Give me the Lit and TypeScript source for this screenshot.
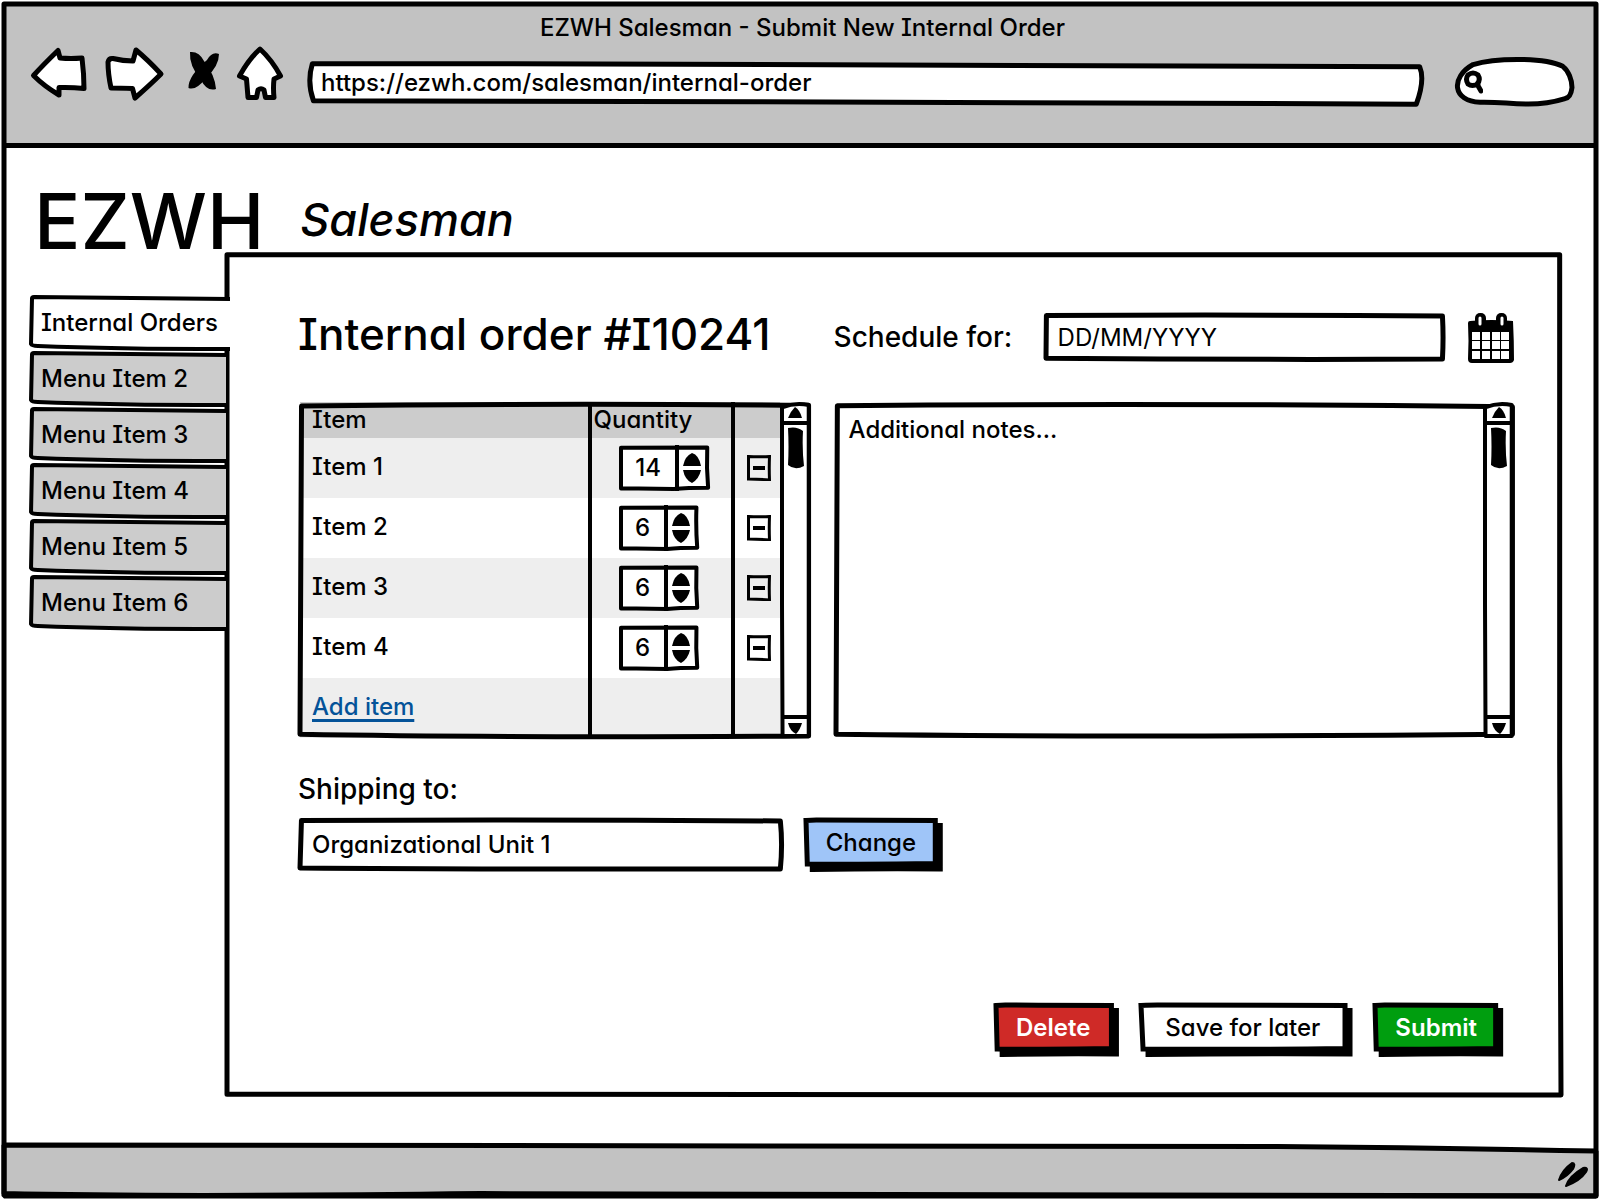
import { LitElement, html, css, svg, nothing } from "lit";
import { customElement, property, state } from "lit/decorators.js";

/** Stretches an outline drawn on a 100 x 100 grid over the nearest positioned box. */
const outline = (d: string, kind = "") => html`
  <svg class="outline ${kind}" viewBox="0 0 100 100" preserveAspectRatio="none" aria-hidden="true">
    <path d=${d}></path>
  </svg>
`;

const outlineStyles = css`
  .outline {
    position: absolute;
    inset: 2px;
    width: calc(100% - 4px);
    height: calc(100% - 4px);
    overflow: visible;
    pointer-events: none;
    z-index: -1;
  }
  .outline path {
    fill: #fff;
    stroke: #000;
    stroke-width: 5px;
    stroke-linejoin: round;
    stroke-linecap: round;
    vector-effect: non-scaling-stroke;
  }
  .outline.over {
    z-index: 2;
  }
  .outline.over path {
    fill: none;
  }
  .outline.medium path {
    stroke-width: 4px;
  }
`;

const baseStyles = css`
  * {
    box-sizing: border-box;
  }
  button,
  input,
  textarea {
    margin: 0;
    padding: 0;
    border: 0;
    background: none;
    color: inherit;
    font: inherit;
    font-feature-settings: inherit;
    outline-offset: 2px;
  }
  button {
    cursor: pointer;
  }
  svg {
    display: block;
  }
`;

@customElement("sketch-scrollbar")
export class SketchScrollbar extends LitElement {
  static styles = [
    baseStyles,
    outlineStyles,
    css`
      :host {
        display: flex;
        flex-direction: column;
        flex: none;
        position: relative;
        isolation: isolate;
        width: 31px;
      }
      .end {
        height: 19px;
        flex: none;
        display: grid;
        place-items: end center;
      }
      .end.down {
        place-items: start center;
        padding-top: 4px;
      }
      .track {
        flex: 1;
        border-top: 4px solid #000;
        border-bottom: 4px solid #000;
        margin: 0 3px;
        padding: 2px 5px;
      }
    `,
  ];

  render() {
    return html`
      ${outline("M0,1 Q50,-0.6 99,0.3 Q101,50 99,100 L2,100 L0,60 Z", "medium")}
      <button class="end" aria-label="Scroll up">
        <svg width="14" height="14" viewBox="0 0 14 14"><path d="M0,11 Q2,5 7,0 Q12,3 14,11 Z" /></svg>
      </button>
      <div class="track">
        <svg width="16" height="42" viewBox="0 0 16 42"><path d="M0,1 Q9,-1 15,4 Q14,22 16,39 Q7,44 0,38 Q1,20 0,1 Z" /></svg>
      </div>
      <button class="end down" aria-label="Scroll down">
        <svg width="14" height="11" viewBox="0 0 14 11"><path d="M0,0 L14,0 Q12,7 8,11 Q2,8 0,0 Z" /></svg>
      </button>
    `;
  }
}

@customElement("quantity-stepper")
export class QuantityStepper extends LitElement {
  @property({ type: Number }) value = 0;
  @property() label = "";

  static styles = [
    baseStyles,
    outlineStyles,
    css`
      :host {
        display: inline-flex;
        position: relative;
        isolation: isolate;
        height: 46px;
      }
      .value {
        width: 45px;
        padding-left: 3px;
        text-align: center;
      }
      .value.wide {
        width: 56px;
      }
      .steps {
        width: 36px;
        padding-right: 5px;
        border-left: 4px solid #000;
        display: flex;
        flex-direction: column;
        align-items: center;
        justify-content: center;
        gap: 4px;
      }
    `,
  ];

  private step(by: number) {
    this.value = Math.max(0, this.value + by);
  }

  render() {
    return html`
      ${outline("M0,2 L98,1 Q97,50 99,97 Q75,97 60,100 Q30,98 0,99 Z", "medium")}
      <input
        class="value ${this.value > 9 ? "wide" : ""}"
        aria-label=${this.label}
        inputmode="numeric"
        .value=${String(this.value)}
      />
      <div class="steps">
        <button aria-label="Increase" @click=${() => this.step(1)}>
          <svg width="18" height="13" viewBox="0 0 18 13"><path d="M0,13 Q2,3 9,0 Q16,2 18,13 Z" /></svg>
        </button>
        <button aria-label="Decrease" @click=${() => this.step(-1)}>
          <svg width="18" height="13" viewBox="0 0 18 13"><path d="M0,0 L18,0 Q16,9 9,13 Q2,10 0,0 Z" /></svg>
        </button>
      </div>
    `;
  }
}

const backIcon = svg`<path class="shape" d="M2.5,29.5 Q13,18 27,4.5 L29,12 Q40,13 51,12 Q53,28 53,42.5 Q40,41 28,41.5 L28,49 Q13,40 2.5,29.5 Z" />`;
const forwardIcon = svg`<path class="shape" d="M3,16 Q4,12 8,12.5 Q18,15 28,15 L31,4 Q43,14 56,28 Q46,38 30,52 L27.5,42.5 Q15,42 6,42 Q3,28 3,16 Z" />`;
const stopIcon = svg`
  <path d="M9,6 Q18,5 23,15 Q34,29 35,43 Q26,46 20,34 Q8,20 9,6 Z" />
  <path d="M38,8 Q31,5 26,14 Q7,30 7.5,42 Q15,45 25,32 Q38,20 38,8 Z" />
`;
const homeIcon = svg`<path class="shape" d="M23,3 Q35,14 43.5,30 L37,33 Q36,42 37,51.5 L28.5,51.5 L27,44 Q24,41.5 21,44 L19.5,51.5 L11,51.5 L9.5,33 L2.5,30 Q12,13 23,3 Z" />`;

const navIcons = [
  { label: "Back", width: 56, shape: backIcon },
  { label: "Forward", width: 58, shape: forwardIcon },
  { label: "Stop", width: 38, shape: stopIcon },
  { label: "Home", width: 46, shape: homeIcon },
];

const menu = ["Internal Orders", "Menu Item 2", "Menu Item 3", "Menu Item 4", "Menu Item 5", "Menu Item 6"];

@customElement("app-root")
export class AppRoot extends LitElement {
  @state() private active = 0;
  @state() private items = [
    { name: "Item 1", quantity: 14 },
    { name: "Item 2", quantity: 6 },
    { name: "Item 3", quantity: 6 },
    { name: "Item 4", quantity: 6 },
  ];

  static styles = [
    baseStyles,
    outlineStyles,
    css`
      :host {
        display: block;
        color: #000;
        font: 500 24px/32px Inter, "Open Sans", sans-serif;
        font-feature-settings: "cv11", "cv08";
      }
      .window {
        position: relative;
        isolation: isolate;
        min-height: 100vh;
        padding: 4px;
        background: #fff;
        display: flex;
        flex-direction: column;
      }
      .window > .outline {
        inset: 4px;
        width: calc(100% - 8px);
        height: calc(100% - 8px);
      }

      .toolbar {
        background: #c2c2c2;
        border-bottom: 5px solid #000;
        padding: 8px 22px 36px 27px;
      }
      .window-title {
        margin: 0;
        font-size: 24px;
        font-weight: 500;
        text-align: center;
        line-height: 32px;
      }
      .nav {
        display: flex;
        align-items: flex-end;
        margin-top: 2px;
      }
      .nav-icons {
        display: flex;
        gap: 18px;
        margin: 0 24px 5px 0;
      }
      .nav-icons svg {
        overflow: visible;
      }
      .shape {
        fill: #fff;
        stroke: #000;
        stroke-width: 5px;
        stroke-linejoin: round;
      }
      .field {
        position: relative;
        isolation: isolate;
        display: flex;
        flex: 1;
        min-width: 0;
      }
      .field input {
        width: 100%;
        min-width: 0;
        height: 100%;
        padding: 0 14px;
      }
      .address {
        height: 46px;
        margin-right: 30px;
      }
      .address input {
        padding-bottom: 4px;
      }
      .search {
        position: relative;
        isolation: isolate;
        flex: none;
        width: 119px;
        height: 50px;
        display: flex;
        align-items: center;
        padding: 0 14px 0 8px;
      }
      .search input {
        width: 100%;
        min-width: 0;
      }
      .search .glass {
        flex: none;
        fill: none;
        stroke: #000;
        stroke-width: 5px;
        stroke-linecap: round;
        stroke-linejoin: round;
      }

      .page {
        flex: 1;
        display: flex;
        flex-direction: column;
        padding: 39px 33px 48px 26px;
      }
      .brand {
        display: flex;
        align-items: center;
        gap: 36px;
        height: 65px;
        padding-left: 4px;
      }
      .logo {
        margin: 0;
        padding-top: 2px;
        font-size: 77px;
        line-height: 62px;
        font-weight: 500;
      }
      .role {
        margin: 0;
        font-size: 45px;
        line-height: 64px;
        font-style: italic;
        font-weight: 500;
      }
      .workspace {
        flex: 1;
        display: grid;
        grid-template-columns: 195px minmax(0, 1fr);
      }
      .tabs {
        display: flex;
        flex-direction: column;
        gap: 1px;
        padding-top: 43px;
        position: relative;
        z-index: 1;
      }
      .tab {
        position: relative;
        isolation: isolate;
        height: 55px;
        padding-left: 11px;
        text-align: left;
        white-space: nowrap;
      }
      .tab .outline {
        width: calc(100% - 1px);
      }
      .tab .outline path {
        fill: #ccc;
        stroke-linecap: butt;
      }
      .tab.active {
        margin-right: -4px;
      }
      .tab.active .outline path {
        fill: #fff;
      }

      .panel {
        position: relative;
        isolation: isolate;
        display: flex;
        flex-direction: column;
        padding: 59px 49px 41px 73px;
      }
      .order {
        display: grid;
        grid-template-columns: minmax(0, 513fr) minmax(0, 681fr);
        column-gap: 23px;
        row-gap: 38px;
      }
      .order-title {
        margin: 0;
        font-size: 44px;
        line-height: 46px;
        font-weight: 500;
        white-space: nowrap;
      }
      .schedule {
        display: flex;
        align-items: center;
        height: 53px;
      }
      .caption {
        font-size: 28px;
        line-height: 32px;
        white-space: nowrap;
      }
      .schedule .caption {
        width: 210px;
        padding-bottom: 2px;
      }
      .schedule .field {
        height: 49px;
        margin-right: 22px;
      }
      ::placeholder {
        color: #000;
        opacity: 1;
      }
      .date {
        font-weight: 400;
      }

      .box {
        position: relative;
        isolation: isolate;
        display: flex;
      }
      table {
        flex: 1;
        min-width: 0;
        margin-left: 2px;
        table-layout: fixed;
        border-collapse: separate;
        border-spacing: 0;
      }
      th,
      td {
        padding: 0 0 0 12px;
        text-align: left;
        font-weight: 500;
      }
      td {
        padding-bottom: 2px;
      }
      th + th,
      td + td {
        border-left: 4px solid #000;
      }
      thead tr {
        height: 36px;
        background: #ccc;
      }
      tbody tr {
        height: 60px;
      }
      tbody tr:nth-child(odd) {
        background: #eee;
      }
      .quantity-head {
        width: 143px;
        padding-left: 2px;
      }
      .remove-head {
        width: 49px;
      }
      .quantity {
        padding: 0 0 0 27px;
      }
      .quantity quantity-stepper {
        vertical-align: middle;
      }
      .remove {
        padding: 0 0 0 12px;
      }
      .remove button {
        display: block;
      }
      .link {
        color: #045399;
        text-decoration: underline;
        text-decoration-thickness: 3px;
        text-underline-offset: 4px;
      }
      .box sketch-scrollbar {
        z-index: 3;
      }
      .notes {
        flex: 1;
        min-width: 0;
        resize: none;
        padding: 12px 15px;
        overflow: hidden;
      }

      .shipping {
        margin-top: 35px;
        display: flex;
        flex-direction: column;
        gap: 13px;
      }
      .shipping-row {
        display: grid;
        grid-template-columns: minmax(0, 488fr) minmax(0, 712fr);
        gap: 19px;
        align-items: start;
      }
      .shipping-row .field {
        height: 53px;
      }
      .action {
        position: relative;
        isolation: isolate;
        justify-self: start;
        height: 53px;
        padding: 0 26px 3px 22px;
        white-space: nowrap;
      }
      .action .outline {
        inset: 2px 7px 7px 2px;
        width: calc(100% - 9px);
        height: calc(100% - 9px);
      }
      .action .outline path {
        stroke-linejoin: miter;
      }
      .action .outline.shadow {
        inset: 7px 2px 2px 7px;
      }
      .action .outline.shadow path {
        fill: #000;
      }
      .action.change .face path {
        fill: #9fc5f8;
      }
      .action.danger .face path {
        fill: #cf2a27;
      }
      .action.confirm .face path {
        fill: #009e0f;
      }
      .danger,
      .confirm {
        color: #fff;
        font-weight: 600;
      }
      .actions {
        margin-top: auto;
        padding-right: 11px;
        display: flex;
        justify-content: flex-end;
        gap: 21px;
      }
      .later {
        padding: 0 32px 3px 26px;
      }
      .danger {
        padding: 0 28px 3px 22px;
      }

      .status {
        position: relative;
        isolation: isolate;
        height: 51px;
        display: flex;
        justify-content: flex-end;
        align-items: flex-end;
        padding: 0 7px 9px 0;
      }
      .status .outline {
        inset: 0;
        width: 100%;
        height: 100%;
      }
      .status .outline path {
        fill: #c2c2c2;
        stroke-linejoin: bevel;
      }
    `,
  ];

  private remove(index: number) {
    this.items = this.items.filter((_, i) => i !== index);
  }

  private add() {
    this.items = [...this.items, { name: `Item ${this.items.length + 1}`, quantity: 1 }];
  }

  private action(text: string, kind: string) {
    return html`
      <button class="action ${kind}">
        ${outline("M1,1 L100,1 L100,100 Q50,99 1,101 Z", "shadow")}
        ${outline("M0,1 Q5,0 8,0 Q50,1 100,1 L100,99 Q50,102 1,100 Z", "face")}${text}
      </button>
    `;
  }

  private toolbar() {
    return html`
      <header class="toolbar">
        <p class="window-title">EZWH Salesman - Submit New Internal Order</p>
        <div class="nav">
          <div class="nav-icons">
            ${navIcons.map(
              (icon) => html`
                <button aria-label=${icon.label}>
                  <svg width=${icon.width} height="56" viewBox="0 0 ${icon.width} 56">${icon.shape}</svg>
                </button>
              `,
            )}
          </div>
          <div class="field address">
            ${outline("M0.3,2 Q50,0 99.7,9 Q100.2,40 99.4,98 Q60,97 40,92 Q20,89 0.4,90 Q-0.2,45 0.3,2 Z")}
            <input aria-label="Address" value="https://ezwh.com/salesman/internal-order" />
          </div>
          <div class="search">
            ${outline("M14,12 C32,-2 75,-5 92,16 C97,26 100,45 100,62 Q99,84 94,86 C85,93 72,98 62,98 C45,98 38,93 20,94 C-4,92 -6,40 14,12 Z")}
            <svg class="glass" width="20" height="26" viewBox="0 0 20 26">
              <path d="M15,15 Q9,18 5,15 Q2,10 5,6 Q10,2 15,6 Q18,11 14,15 L18,22" />
            </svg>
            <input type="search" aria-label="Search" />
          </div>
        </div>
      </header>
    `;
  }

  private itemsTable() {
    return html`
      <div class="box">
        ${outline("M0.3,0.6 Q50,-0.3 100,0.4 L100,100 Q40,100.6 0,99.5 Z", "over")}
        <table>
          <thead>
            <tr>
              <th scope="col">Item</th>
              <th class="quantity-head" scope="col">Quantity</th>
              <th class="remove-head" scope="col" aria-label="Remove"></th>
            </tr>
          </thead>
          <tbody>
            ${this.items.map(
              (item, index) => html`
                <tr>
                  <td>${item.name}</td>
                  <td class="quantity">
                    <quantity-stepper .value=${item.quantity} label="${item.name} quantity"></quantity-stepper>
                  </td>
                  <td class="remove">
                    <button aria-label="Remove ${item.name}" @click=${() => this.remove(index)}>
                      <svg width="24" height="26" viewBox="0 0 24 26">
                        <path fill="none" stroke="#000" stroke-width="3" d="M1.5,1.5 Q12,2 22.5,1.5 Q22,13 22.5,25 Q12,24 1.5,24 Z" />
                        <path stroke="#000" stroke-width="4" d="M6,13 L18,13" />
                      </svg>
                    </button>
                  </td>
                </tr>
              `,
            )}
            <tr>
              <td><a class="link" href="#add" @click=${this.add}>Add item</a></td>
              <td></td>
              <td></td>
            </tr>
          </tbody>
        </table>
        <sketch-scrollbar></sketch-scrollbar>
      </div>
    `;
  }

  render() {
    return html`
      <div class="window">
        ${outline("M0,0 L100,0 L100,100 Q60,99.8 30,99.8 Q10,100.1 0,99.8 Z", "over")}
        ${this.toolbar()}
        <main class="page">
          <div class="brand">
            <h1 class="logo">EZWH</h1>
            <p class="role">Salesman</p>
          </div>
          <div class="workspace">
            <nav class="tabs" aria-label="Sections">
              ${menu.map(
                (name, index) => html`
                  <button
                    class="tab ${index === this.active ? "active" : ""}"
                    aria-current=${index === this.active ? "page" : nothing}
                    @click=${() => (this.active = index)}
                  >
                    ${outline("M100,4 L1,0 Q0,0 0,3 L-0.5,92 Q0,96 3,96 Q40,102 100,102", "medium")}${name}
                  </button>
                `,
              )}
            </nav>
            <section class="panel">
              ${outline("M0,0.1 L99.9,0.1 L99.9,60 L100,100 L0,99.9 Z")}
              <div class="order">
                <h2 class="order-title">Internal order #I10241</h2>
                <div class="schedule">
                  <label class="caption" for="date">Schedule for:</label>
                  <div class="field">
                    ${outline("M0.1,1 Q50,-1 99.5,2 Q99.8,50 99.5,98 Q50,100 0,96 Z")}
                    <input id="date" class="date" placeholder="DD/MM/YYYY" />
                  </div>
                  <button aria-label="Open calendar">
                    <svg width="46" height="50" viewBox="0 0 46 50">
                      <path d="M2,8 Q24,6 45,8 Q46,28 46,47 Q45,50 42,50 L4,50 Q0,50 0,46 Q1,28 0,10 Q0,8 2,8 Z" />
                      <rect x="7" y="0" width="11" height="14" rx="5" />
                      <rect x="28" y="0" width="11" height="14" rx="5" />
                      <path stroke="#fff" stroke-width="3" stroke-linecap="round" d="M12,5 V11 M34,5 V11" />
                      ${[19, 28, 38].map((y) =>
                        [4, 14, 24, 33].map((x) => svg`<rect x=${x} y=${y} width="8" height="8" fill="#fff" />`),
                      )}
                    </svg>
                  </button>
                </div>
                ${this.itemsTable()}
                <div class="box">
                  ${outline("M0.2,0.5 Q50,-0.3 100,0.8 L100,99.5 Q40,100.5 0,99.5 Z")}
                  <textarea class="notes" aria-label="Additional notes" placeholder="Additional notes..."></textarea>
                  <sketch-scrollbar></sketch-scrollbar>
                </div>
              </div>
              <div class="shipping">
                <label class="caption" for="unit">Shipping to:</label>
                <div class="shipping-row">
                  <div class="field">
                    ${outline("M0.3,1 Q50,-1 99.5,2 Q100,50 99.5,100 Q40,101 0,98 Z")}
                    <input id="unit" value="Organizational Unit 1" />
                  </div>
                  ${this.action("Change", "change")}
                </div>
              </div>
              <div class="actions">
                ${this.action("Delete", "danger")} ${this.action("Save for later", "later")}
                ${this.action("Submit", "confirm")}
              </div>
            </section>
          </div>
        </main>
        <footer class="status">
          ${outline("M0,0 Q70,2 80,3 Q90,5 100,12 L100,100 L0,100 Z")}
          <svg width="31" height="25" viewBox="0 0 31 25" aria-hidden="true">
            <path stroke="#000" stroke-width="2" stroke-linejoin="round" d="M1,18 Q4,8 14,1 Q18,1 15,7 Q9,15 1,18 Z" />
            <path stroke="#000" stroke-width="2" stroke-linejoin="round" d="M8,24 Q11,14 25,6 Q31,5 28,10 Q22,19 8,24 Z" />
          </svg>
        </footer>
      </div>
    `;
  }
}
